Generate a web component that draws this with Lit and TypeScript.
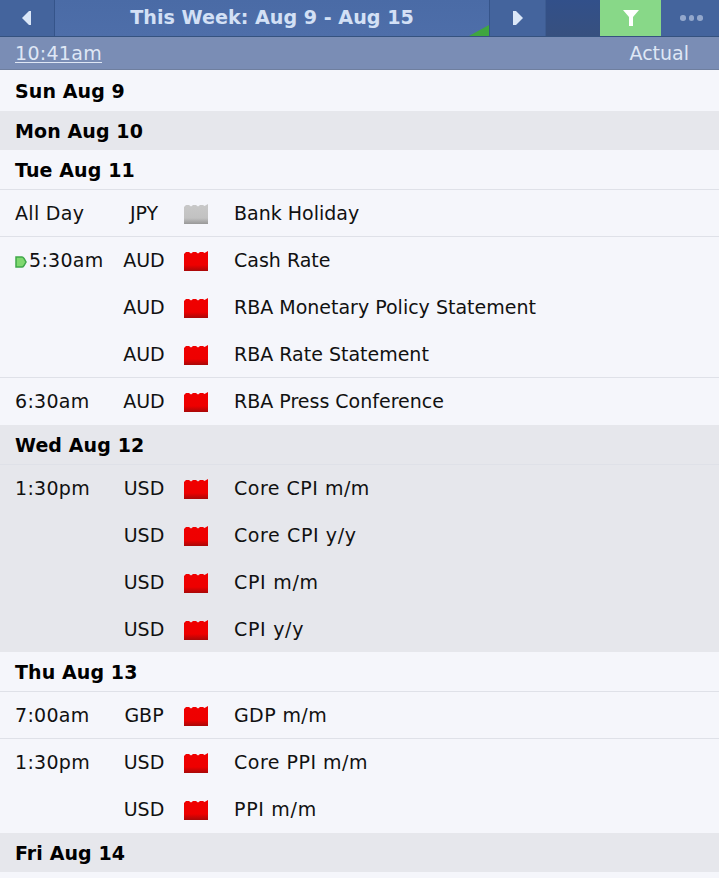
import { LitElement, html, css, svg } from 'lit';
import { customElement } from 'lit/decorators.js';

type Row = {
  time?: string;
  cur: string;
  impact: 'high' | 'holiday';
  title: string;
  now?: boolean;
  line?: boolean;
  track?: number;
};
type Day = { label: string; alt?: boolean; rows?: Row[] };

const DAYS: Day[] = [
  { label: 'Sun Aug 9' },
  { label: 'Mon Aug 10', alt: true },
  {
    label: 'Tue Aug 11',
    rows: [
      { time: 'All Day', cur: 'JPY', impact: 'holiday', title: 'Bank Holiday', line: true },
      { time: '5:30am', now: true, cur: 'AUD', impact: 'high', title: 'Cash Rate', line: true },
      { cur: 'AUD', impact: 'high', title: 'RBA Monetary Policy Statement' },
      { cur: 'AUD', impact: 'high', title: 'RBA Rate Statement' },
      { time: '6:30am', cur: 'AUD', impact: 'high', title: 'RBA Press Conference', line: true },
    ],
  },
  {
    label: 'Wed Aug 12',
    alt: true,
    rows: [
      { time: '1:30pm', cur: 'USD', impact: 'high', title: 'Core CPI m/m', line: true, track: 0.5 },
      { cur: 'USD', impact: 'high', title: 'Core CPI y/y', track: 0.6 },
      { cur: 'USD', impact: 'high', title: 'CPI m/m', track: 0.7 },
      { cur: 'USD', impact: 'high', title: 'CPI y/y', track: 0.7 },
    ],
  },
  {
    label: 'Thu Aug 13',
    rows: [
      { time: '7:00am', cur: 'GBP', impact: 'high', title: 'GDP m/m', line: true, track: 0.4 },
      { time: '1:30pm', cur: 'USD', impact: 'high', title: 'Core PPI m/m', line: true, track: 0.5 },
      { cur: 'USD', impact: 'high', title: 'PPI m/m', track: 0.7 },
    ],
  },
  { label: 'Fri Aug 14', alt: true },
];

// little factory shape used for the impact folder
const folder = (impact: string) => svg`
  <svg class="folder" width="24" height="20" viewBox="0 0 24 20">
    <defs>
      <linearGradient id="f-high" x1="0" y1="0" x2="0" y2="1">
        <stop offset="0" stop-color="#f00000" />
        <stop offset="0.7" stop-color="#ee0000" />
        <stop offset="1" stop-color="#a80808" />
      </linearGradient>
      <linearGradient id="f-holiday" x1="0" y1="0" x2="0" y2="1">
        <stop offset="0" stop-color="#c8c8c8" />
        <stop offset="0.7" stop-color="#c2c2c2" />
        <stop offset="1" stop-color="#989898" />
      </linearGradient>
    </defs>
    <path fill="url(#f-${impact})" d="M0 3 L2 1 H5 L7 2.5 L9 1 H12 L14 2.5 L16 1 H19 L20.5 2 L24 0 V20 H0 Z" />
  </svg>`;

@customElement('app-root')
export class AppRoot extends LitElement {
  static styles = css`
    :host {
      display: block;
      width: 719px;
      height: 878px;
      overflow: hidden;
      background: #f5f6fb;
      font-family: 'DejaVu Sans', sans-serif;
      font-size: 19px;
      color: #111;
    }
    .nav {
      display: flex;
      height: 36px;
      background: linear-gradient(#4a6ba6, #4e6ea9);
      border-bottom: 1px solid #35527f;
    }
    .arrow {
      width: 54px;
      display: flex;
      align-items: center;
      justify-content: center;
      background: #44649d;
      border-right: 1px solid #35548a;
    }
    .week {
      position: relative;
      flex: 1;
      text-align: center;
      line-height: 35px;
      font-weight: bold;
      color: #d3e0f5;
      font-size: 19.15px;
    }
    .week .corner {
      position: absolute;
      right: 0;
      bottom: 0;
      width: 0;
      height: 0;
      border-style: solid;
      border-width: 0 0 11px 20px;
      border-color: transparent transparent #3fa63f transparent;
    }
    .next {
      width: 55px;
      display: flex;
      align-items: center;
      justify-content: center;
      background: #44649d;
      border-left: 1px solid #35548a;
      border-right: 1px solid #3d5c92;
    }
    .gap {
      width: 54px;
      background: linear-gradient(#32508a, #37507f);
    }
    .filter {
      width: 61px;
      display: flex;
      align-items: center;
      justify-content: center;
      background: #88d888;
    }
    .more {
      flex: none;
      box-sizing: border-box;
      width: 58px;
      padding-left: 3px;
      display: flex;
      align-items: center;
      justify-content: center;
      gap: 3px;
      background: #44649d;
    }
    .more i {
      width: 5.5px;
      height: 5.5px;
      border-radius: 50%;
      background: #93a7cc;
    }
    .sub {
      display: flex;
      justify-content: space-between;
      height: 32px;
      line-height: 33px;
      padding: 0 30px 0 15px;
      background: #7a8db5;
      border-bottom: 1px solid #6f7f9f;
      color: #dfe7f5;
    }
    .sub u {
      letter-spacing: 0.3px;
      text-underline-offset: 2px;
    }
    .day.alt {
      background: #e6e7ec;
      border-top: 1px solid #f5f6fb;
      background-clip: padding-box;
    }
    .head {
      height: 39px;
      line-height: 40px;
      padding-left: 15px;
      font-weight: bold;
      letter-spacing: 0.1px;
      color: #000;
    }
    .day:first-child .head {
      height: 40px;
      line-height: 42px;
    }
    .row {
      display: grid;
      grid-template-columns: 99px 60px 44px 1fr;
      height: 47px;
      line-height: 47px;
      box-sizing: border-box;
      padding-left: 15px;
      border-top: 1px solid transparent;
    }
    .row.line {
      border-top-color: #dfe1e8;
    }
    .time {
      position: relative;
      white-space: nowrap;
      letter-spacing: 0.3px;
    }
    .time.now {
      padding-left: 14px;
    }
    .marker {
      position: absolute;
      left: 0;
      top: 19px;
    }
    .cur {
      text-align: center;
    }
    .impact {
      display: flex;
      align-items: center;
      justify-content: center;
    }
    .folder {
      display: block;
      margin-top: 1px;
    }
    .title {
      padding-left: 16px;
      white-space: nowrap;
    }
  `;

  render() {
    return html`
      <div class="nav">
        <div class="arrow">
          <svg width="10" height="14" viewBox="0 0 10 14"><path fill="#dbe7f8" d="M9 0 V14 H7 L0 7 L7 0 Z" /></svg>
        </div>
        <div class="week">This Week: Aug 9 - Aug 15<span class="corner"></span></div>
        <div class="next">
          <svg width="10" height="14" viewBox="0 0 10 14"><path fill="#dbe7f8" d="M0 0 H3 L10 7 L3 14 H0 Z" /></svg>
        </div>
        <div class="gap"></div>
        <div class="filter">
          <svg width="16" height="16" viewBox="0 0 16 16"><path fill="#fff" d="M0 0 H16 L10 7 V16 H6 V7 Z" /></svg>
        </div>
        <div class="more"><i></i><i></i><i></i></div>
      </div>
      <div class="sub"><u>10:41am</u><span>Actual</span></div>
      <div class="list">
        ${DAYS.map(
          (d) => html`
            <div class="day ${d.alt ? 'alt' : ''}">
              <div class="head">${d.label}</div>
              ${(d.rows ?? []).map(
                (r) => html`
                  <div class="row ${r.line ? 'line' : ''}">
                    <div class="time ${r.now ? 'now' : ''}">
                      ${r.now
                        ? html`<svg class="marker" width="12" height="12" viewBox="0 0 12 12">
                            <path fill="#7fd86f" stroke="#3fa84a" stroke-width="1.5" d="M1 1 H7 Q8 1 9 2.5 L11 6 L9 9.5 Q8 11 7 11 H1 Z" />
                          </svg>`
                        : ''}${r.time ?? ''}
                    </div>
                    <div class="cur">${r.cur}</div>
                    <div class="impact">${folder(r.impact)}</div>
                    <div class="title" style=${r.track ? `letter-spacing:${r.track}px` : ''}>${r.title}</div>
                  </div>
                `
              )}
            </div>
          `
        )}
      </div>
    `;
  }
}
